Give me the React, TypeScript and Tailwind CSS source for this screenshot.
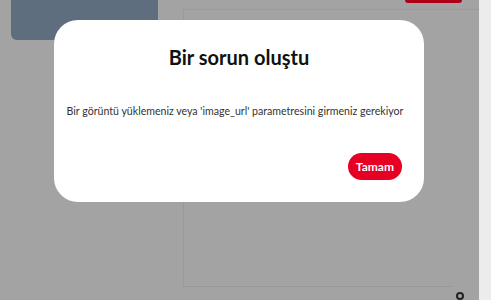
import React from 'react';

const font = { fontFamily: 'Lato, "Noto Sans", sans-serif' };

export default function App() {
  return (
    <div className="relative h-[300px] w-[491px] overflow-hidden bg-[#a3a3a3]" style={font}>
      {/* underlying page, dimmed */}
      <div className="flex h-full">
        <div className="w-[183px] shrink-0 pl-[11px]">
          <div className="h-[40px] w-[147px] rounded-b-[6px] bg-[#5f6e7f]" />
        </div>
        <div className="flex w-[296px] flex-col">
          <div className="flex h-[10px] justify-end border-b border-[#9a9a9a] pr-[17px]">
            <div className="h-[3px] w-[57px] rounded-b-[3px] bg-[#ad0019]" />
          </div>
          <div className="mr-[26px] h-[282px] border-b border-l border-[#999999]" />
          <div className="flex justify-end pr-[15px] pt-[5px]">
            <div className="h-[8px] w-[8px] shrink-0 rounded-full border-2 border-[#222222]" />
          </div>
        </div>
        <div className="w-[12px] bg-[#ececec]" />
      </div>

      {/* dialog */}
      <div className="absolute left-[54px] top-[20px] flex h-[182px] w-[370px] flex-col rounded-[24px] bg-white">
        <h2 className="mt-[23px] text-center text-[20px] font-bold leading-[28px] text-[#111111]">
          Bir sorun oluştu
        </h2>
        <p className="mt-[32px] pr-[8px] text-center text-[10.6px] leading-[16px] text-[#333333]">
          Bir görüntü yüklemeniz veya 'image_url' parametresini girmeniz gerekiyor
        </p>
        <div className="mt-[34px] flex justify-end pr-[22px]">
          <button className="h-[27px] rounded-full bg-[#e60023] px-[8px] text-[12px] font-bold text-white">
            Tamam
          </button>
        </div>
      </div>
    </div>
  );
}
